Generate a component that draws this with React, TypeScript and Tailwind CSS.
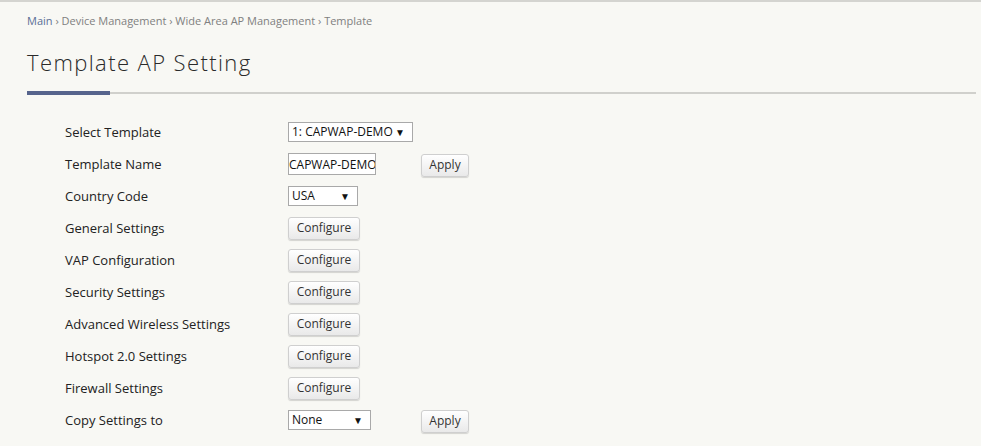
import React from "react";

const font = { fontFamily: '"Open Sans", "Noto Sans", sans-serif' };

function FakeSelect({ value, width }: { value: string; width: string }) {
  return (
    <div
      className={`flex h-[20px] items-center justify-between border border-[#a9a9a9] bg-white pl-[3px] pr-[7px] text-[12px] text-[#111] ${width}`}
    >
      <span>{value}</span>
      <span className="text-[10px] leading-none">▼</span>
    </div>
  );
}

function Btn({ label, width }: { label: string; width: string }) {
  return (
    <button
      className={`h-[23px] rounded-[3px] border border-[#cfcfcf] bg-gradient-to-b from-white to-[#e9e9e9] text-[12px] text-[#333] shadow-[0_1px_1px_rgba(0,0,0,0.15)] ${width}`}
    >
      {label}
    </button>
  );
}

const configureRows = [
  "General Settings",
  "VAP Configuration",
  "Security Settings",
  "Advanced Wireless Settings",
  "Hotspot 2.0 Settings",
  "Firewall Settings",
];

function Row({ label, children }: { label: string; children: React.ReactNode }) {
  return (
    <div className="flex h-[32px] items-center">
      <div className="w-[223px] pt-[2px] text-[13px] text-[#222]">{label}</div>
      <div className="flex items-center">{children}</div>
    </div>
  );
}

export default function App() {
  return (
    <div
      className="h-[446px] w-full overflow-hidden border-t-2 border-[#d4d4d0] bg-[#f8f8f4]"
      style={font}
    >
      <div className="pl-[27px] pt-[11px] text-[11px] leading-[16px] text-[#808080]">
        <span className="text-[#5a6f96]">Main</span>
        <span> › Device Management › Wide Area AP Management › Template</span>
      </div>

      <h1 className="mt-[18px] pl-[27px] text-[22px] font-light leading-[30px] tracking-[1.4px] text-[#2a2a2a]">
        Template AP Setting
      </h1>

      <div className="mr-[5px] mt-[14px] flex items-center pl-[27px]">
        <div className="h-[4px] w-[83px] bg-[#56648c]" />
        <div className="h-[2px] flex-1 bg-[#d0d0cc]" />
      </div>

      <div className="mt-[21px] pl-[65px]">
        <Row label="Select Template">
          <FakeSelect value="1: CAPWAP-DEMO" width="w-[125px]" />
        </Row>
        <Row label="Template Name">
          <input
            readOnly
            value="CAPWAP-DEMO"
            className="h-[22px] w-[88px] border border-[#a9a9a9] bg-white px-0 text-[12px] text-[#111] outline-none"
          />
          <div className="ml-[45px]">
            <Btn label="Apply" width="w-[48px]" />
          </div>
        </Row>
        <Row label="Country Code">
          <FakeSelect value="USA" width="w-[70px]" />
        </Row>
        {configureRows.map((r) => (
          <Row key={r} label={r}>
            <Btn label="Configure" width="w-[72px]" />
          </Row>
        ))}
        <Row label="Copy Settings to">
          <FakeSelect value="None" width="w-[83px]" />
          <div className="ml-[50px]">
            <Btn label="Apply" width="w-[48px]" />
          </div>
        </Row>
      </div>
    </div>
  );
}
